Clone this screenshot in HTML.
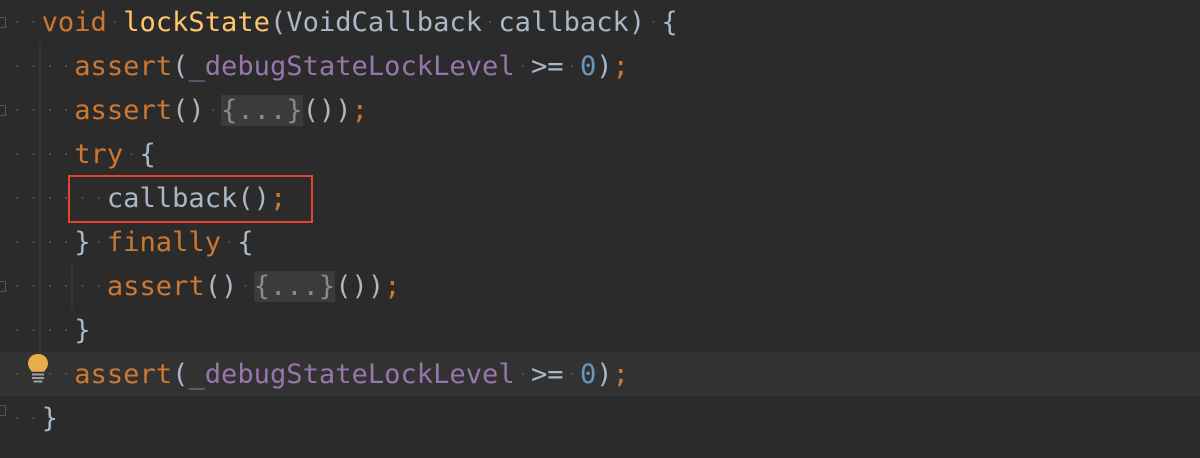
<!DOCTYPE html>
<html><head><meta charset="utf-8"><style>
html,body{margin:0;padding:0;background:#2b2b2b;width:1200px;height:458px;overflow:hidden;position:relative}
.ln{position:absolute;left:9px;height:44px;line-height:46px;font-family:"DejaVu Sans Mono","Liberation Mono",monospace;font-size:27.1px;color:#a9b7c6;white-space:pre;width:1191px}
.s{display:inline-block;width:16.32px;height:44px;vertical-align:top;background:radial-gradient(circle at 50% 50%,#4c4c4c 0 1px,transparent 1.4px)}
.k{color:#cc7832}.f{color:#ffc66d}.p{color:#9876aa}.n{color:#6897bb}
.fold{background:#3b3b3b;color:#8a8a8a}
.guide{position:absolute;width:2px;background:#363636}
.fi{position:absolute;left:0;width:5px;height:9px;border:1.5px solid #555;border-left:none}
</style></head><body>
<div style="position:absolute;left:0;top:352px;width:1200px;height:44px;background:#323232"></div>
<div class="guide" style="left:39px;top:44px;height:352px"></div>
<div class="guide" style="left:71px;top:264px;height:44px"></div>
<div class="ln" style="top:0"><span class="s"></span><span class="s"></span><span class="k">void</span><span class="s"></span><span class="f">lockState</span>(VoidCallback<span class="s"></span>callback)<span class="s"></span>{</div>
<div class="ln" style="top:44px"><span class="s"></span><span class="s"></span><span class="s"></span><span class="s"></span><span class="k">assert</span>(<span class="p">_debugStateLockLevel</span><span class="s"></span>&gt;=<span class="s"></span><span class="n">0</span>)<span class="k">;</span></div>
<div class="ln" style="top:88px"><span class="s"></span><span class="s"></span><span class="s"></span><span class="s"></span><span class="k">assert</span>()<span class="s"></span><span class="fold">{...}</span>())<span class="k">;</span></div>
<div class="ln" style="top:132px"><span class="s"></span><span class="s"></span><span class="s"></span><span class="s"></span><span class="k">try</span><span class="s"></span>{</div>
<div class="ln" style="top:176px"><span class="s"></span><span class="s"></span><span class="s"></span><span class="s"></span><span class="s"></span><span class="s"></span>callback()<span class="k">;</span></div>
<div class="ln" style="top:220px"><span class="s"></span><span class="s"></span><span class="s"></span><span class="s"></span>}<span class="s"></span><span class="k">finally</span><span class="s"></span>{</div>
<div class="ln" style="top:264px"><span class="s"></span><span class="s"></span><span class="s"></span><span class="s"></span><span class="s"></span><span class="s"></span><span class="k">assert</span>()<span class="s"></span><span class="fold">{...}</span>())<span class="k">;</span></div>
<div class="ln" style="top:308px"><span class="s"></span><span class="s"></span><span class="s"></span><span class="s"></span>}</div>
<div class="ln" style="top:352px"><span class="s"></span><span class="s"></span><span class="s"></span><span class="s"></span><span class="k">assert</span>(<span class="p">_debugStateLockLevel</span><span class="s"></span>&gt;=<span class="s"></span><span class="n">0</span>)<span class="k">;</span></div>
<div class="ln" style="top:396px"><span class="s"></span><span class="s"></span>}</div>
<div style="position:absolute;left:68px;top:175px;width:241px;height:44px;border:2px solid #e0452f"></div>
<div class="fi" style="top:17px"></div>
<div class="fi" style="top:105px"></div>
<div class="fi" style="top:281px"></div>
<div class="fi" style="top:405px"></div>
<svg style="position:absolute;left:26px;top:353px" width="24" height="34" viewBox="0 0 24 34">
<path d="M12 1C6 1 2 5 2 10.5c0 4 2.5 6 3.8 8.3h12.4C19.5 16.5 22 14.5 22 10.5 22 5 18 1 12 1z" fill="#e8ad4a"/>
<rect x="6" y="20.5" width="12" height="2" fill="#a0a0a0"/><rect x="6" y="24" width="12" height="2" fill="#a0a0a0"/><rect x="7.5" y="27.5" width="9" height="2" fill="#a0a0a0"/>
</svg>
</body></html>
